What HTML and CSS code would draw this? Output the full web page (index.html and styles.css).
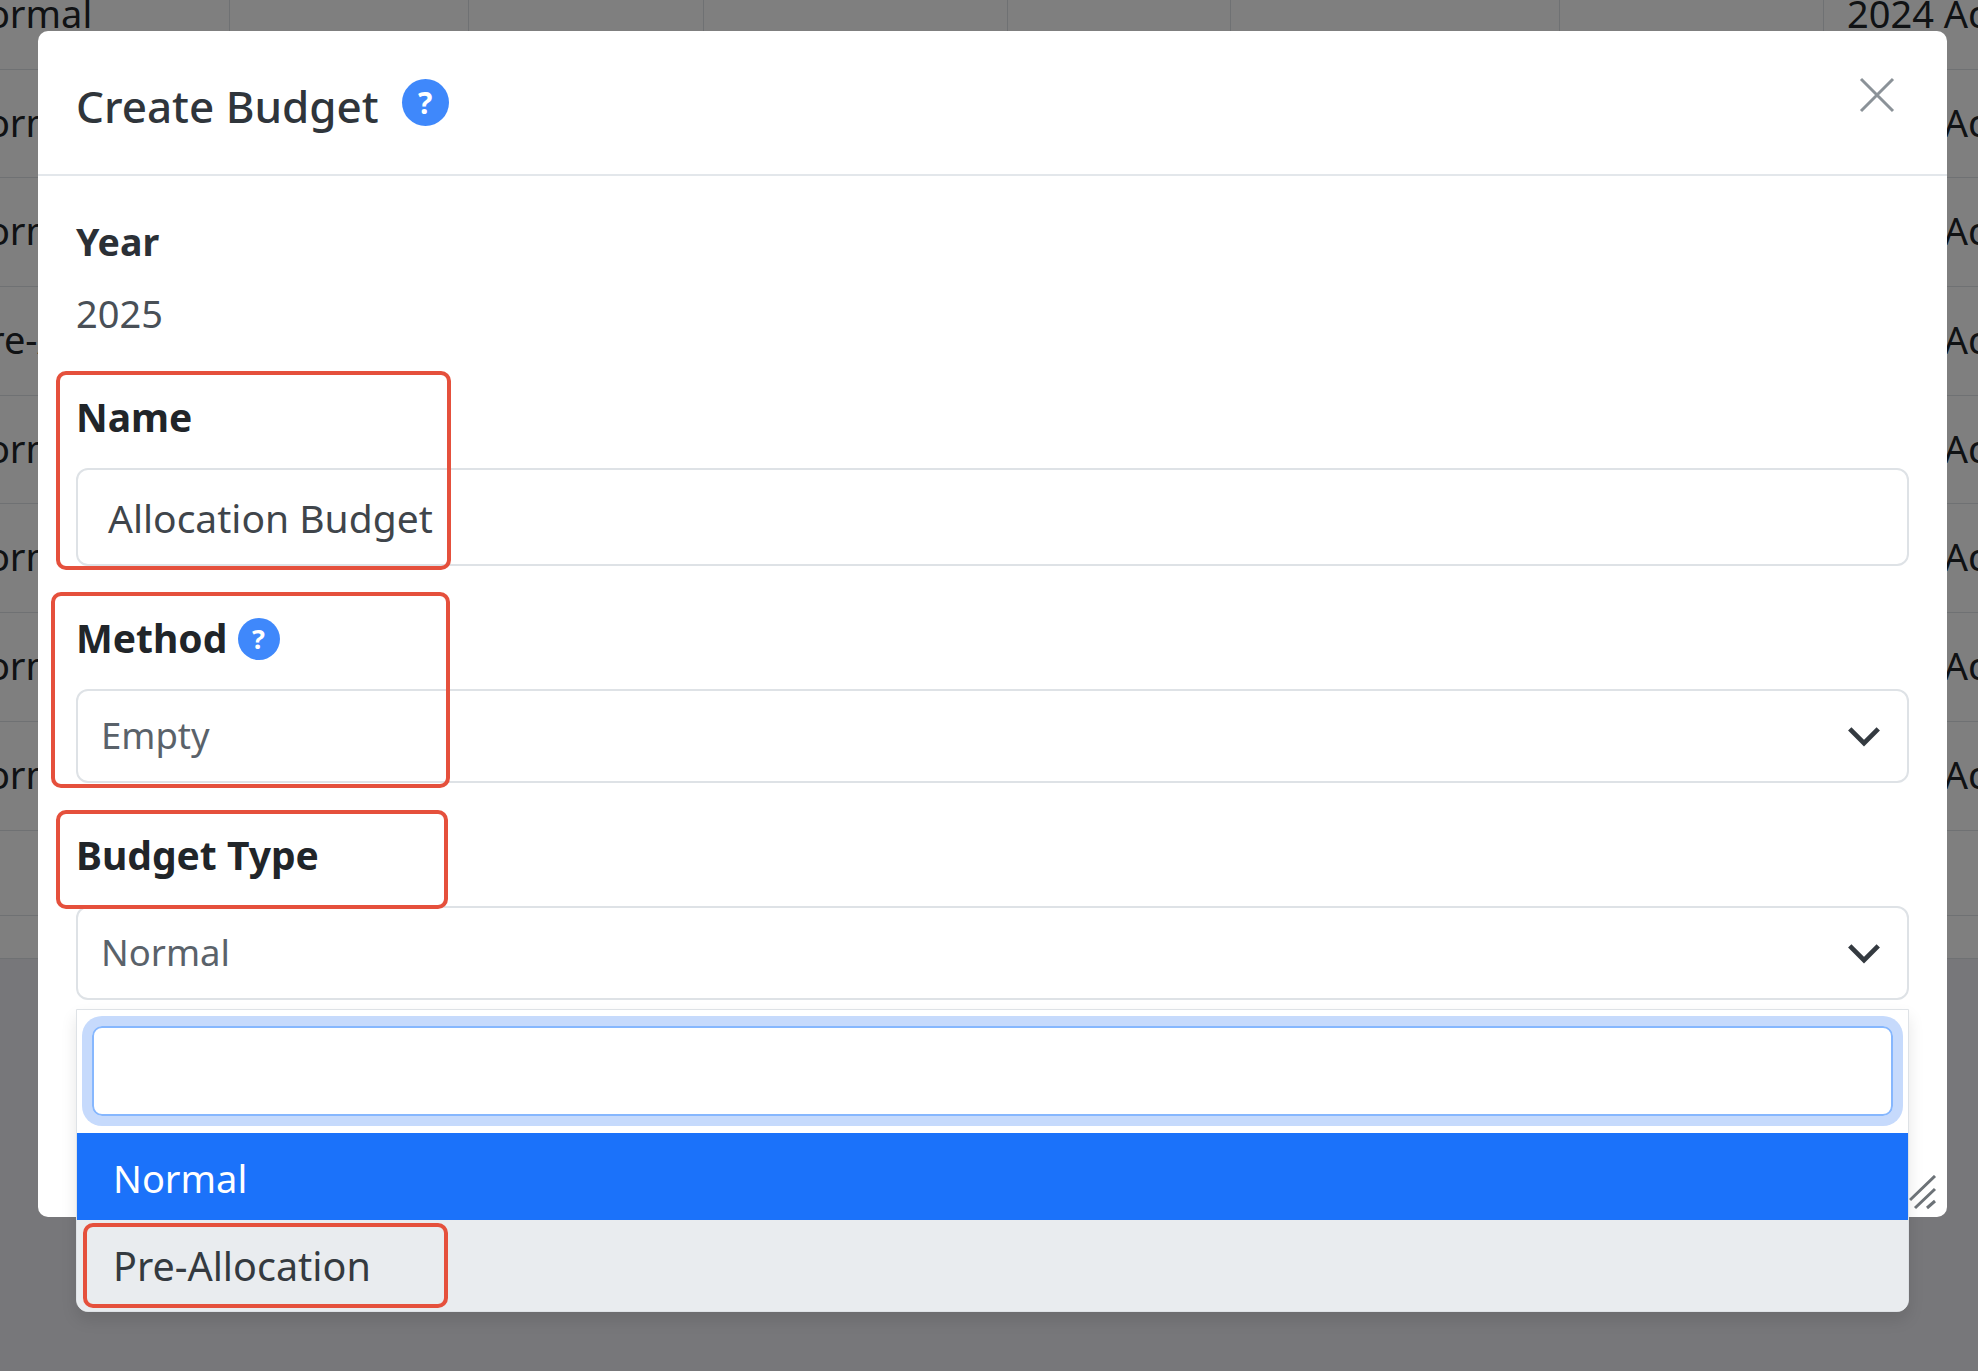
FILE: index.html
```html
<!DOCTYPE html>
<html lang="en">
<head>
  <meta charset="UTF-8">
  <title>Create Budget</title>
  <link rel="stylesheet" href="styles.css">
</head>
<body>
  <div class="table">
    <div class="row"><div>Normal</div><div></div><div></div><div></div><div></div><div></div><div></div><div>2024 Actual</div></div>
    <div class="row"><div>Normal</div><div></div><div></div><div></div><div></div><div></div><div></div><div>2024 Actual</div></div>
    <div class="row"><div>Normal</div><div></div><div></div><div></div><div></div><div></div><div></div><div>2024 Actual</div></div>
    <div class="row row-pre"><div>Pre-Allocation</div><div></div><div></div><div></div><div></div><div></div><div></div><div>2024 Actual</div></div>
    <div class="row"><div>Normal</div><div></div><div></div><div></div><div></div><div></div><div></div><div>2024 Actual</div></div>
    <div class="row"><div>Normal</div><div></div><div></div><div></div><div></div><div></div><div></div><div>2024 Actual</div></div>
    <div class="row"><div>Normal</div><div></div><div></div><div></div><div></div><div></div><div></div><div>2024 Actual</div></div>
    <div class="row"><div>Normal</div><div></div><div></div><div></div><div></div><div></div><div></div><div>2024 Actual</div></div>
    <div class="row row-blank"></div>
    <div class="row row-foot"></div>
  </div>

  <div class="backdrop"></div>

  <div class="modal">
    <div class="modal-header">
      <h5 class="modal-title">Create Budget</h5>
      <span class="help help-lg">?</span>
      <svg class="close-btn" viewBox="0 0 36 36"><path d="M2 2 L34 34 M34 2 L2 34"/></svg>
    </div>

    <div class="modal-body">
      <div class="year-field">
        <div class="form-label">Year</div>
        <div class="year-value">2025</div>
      </div>

      <div class="field">
        <div class="form-label">Name</div>
        <div class="form-control">Allocation Budget</div>
      </div>

      <div class="field">
        <div class="form-label">Method <span class="help">?</span></div>
        <div class="form-select">
          <span>Empty</span>
          <svg class="chevron" viewBox="0 0 16 16"><path d="M2 5l6 6 6-6"/></svg>
        </div>
      </div>

      <div class="field">
        <div class="form-label">Budget Type</div>
        <div class="select-wrap">
          <div class="form-select">
            <span>Normal</span>
            <svg class="chevron" viewBox="0 0 16 16"><path d="M2 5l6 6 6-6"/></svg>
          </div>
          <div class="dropdown">
            <div class="search-box"></div>
            <div class="option option-active">Normal</div>
            <div class="option option-hover">Pre-Allocation</div>
          </div>
        </div>
      </div>
    </div>

    <svg class="resize-handle" viewBox="0 0 30 36"><path d="M1 25 L26 1 M6 33 L26 14 M18 33 L26 26"/></svg>

    <div class="mark mark-name"></div>
    <div class="mark mark-method"></div>
    <div class="mark mark-type"></div>
    <div class="mark mark-option"></div>
  </div>
</body>
</html>
```

FILE: styles.css
```css
html, body {
  height: 100%;
}
body {
  margin: 0;
  overflow: hidden;
  position: relative;
  background-color: #eeeff4;
  color: #212529;
  font-family: "Noto Sans", "Open Sans", sans-serif;
  font-size: 38px;
}

/* table behind the modal */
.table {
  margin-top: -39px;
  margin-left: -55px;
  width: 2100px;
  background-color: #fff;
}
.row {
  display: grid;
  grid-template-columns: 285px 239px 235px 304px 223px 329px 264px 200px;
  height: 108.7px;
  border-bottom: 1px solid #dee2e6;
  box-sizing: border-box;
}
.row > div {
  padding-left: 23px;
  padding-bottom: 4px;
  border-right: 1px solid #dee2e6;
  display: flex;
  align-items: center;
  white-space: nowrap;
  overflow: hidden;
}
.row > div:first-child {
  padding-left: 13px;
}
.row-pre > div:first-child {
  padding-left: 21px;
}
.row-blank {
  height: 85px;
}
.row-foot {
  height: 43px;
}
.backdrop {
  position: absolute;
  top: 0;
  left: 0;
  right: 0;
  bottom: 0;
  background-color: rgba(0, 0, 0, 0.5);
}

/* modal */
.modal {
  position: absolute;
  top: 31px;
  left: 38px;
  width: 1909px;
  height: 1186px;
  background-color: #fff;
  border-radius: 10px;
}
.modal-header {
  height: 145px;
  box-sizing: border-box;
  padding-left: 38px;
  padding-right: 52px;
  border-bottom: 2px solid #e3e7eb;
  display: flex;
  align-items: center;
}
.modal-title {
  margin: 6px 0 0;
  font-size: 44px;
  font-weight: 500;
  color: #2f353b;
}
.help {
  display: inline-flex;
  justify-content: center;
  align-items: center;
  width: 42px;
  height: 42px;
  border-radius: 50%;
  background-color: #3f88fb;
  color: #fff;
  font-size: 27px;
  font-weight: 700;
  vertical-align: 4px;
}
.help-lg {
  width: 47px;
  height: 47px;
  margin-left: 23px;
  font-size: 30px;
}
.close-btn {
  width: 36px;
  height: 36px;
  margin-left: auto;
  margin-bottom: 16px;
  fill: none;
  stroke: #8b9298;
  stroke-width: 3;
}
.modal-body {
  padding: 41px 38px 0;
}
.form-label {
  font-size: 39px;
  font-weight: 700;
  line-height: 50px;
  margin-bottom: 26px;
}
.year-field {
  margin-bottom: 54px;
}
.year-field .form-label {
  font-size: 37.5px;
  margin-bottom: 21px;
  color: #2b3036;
}
.year-value {
  line-height: 50px;
  color: #495057;
}
.field {
  margin-bottom: 47px;
}
.form-control, .form-select {
  box-sizing: border-box;
  border: 2px solid #dee2e6;
  border-radius: 12px;
  display: flex;
  align-items: center;
}
.form-control {
  height: 98px;
  padding-left: 30px;
  font-size: 39px;
  color: #3f454b;
}
.form-select {
  height: 94px;
  padding-left: 23px;
  padding-right: 24px;
  justify-content: space-between;
  font-size: 36.5px;
  color: #5a626a;
}
.form-select span {
  padding-bottom: 3px;
}
.chevron {
  width: 38px;
  height: 38px;
  fill: none;
  stroke: #343a40;
  stroke-width: 2;
}
.select-wrap {
  position: relative;
}
.dropdown {
  position: absolute;
  top: 103px;
  left: 0;
  right: 0;
  box-sizing: border-box;
  height: 303px;
  padding-top: 16px;
  background-color: #fff;
  border: 1px solid #dee2e6;
  border-radius: 0 0 12px 12px;
  box-shadow: 0 8px 16px rgba(0, 0, 0, 0.1);
  overflow: hidden;
}
.search-box {
  height: 90px;
  margin: 0 15px 17px;
  box-sizing: border-box;
  border: 2px solid #86b7fe;
  border-radius: 10px;
  box-shadow: 0 0 0 10px #c6dafc;
}
.option {
  height: 87px;
  padding-left: 36px;
  display: flex;
  align-items: center;
}
.option-active {
  padding-top: 3px;
  box-sizing: border-box;
  background-color: #1b72fa;
  color: #fff;
}
.option-hover {
  height: 92px;
  font-size: 39.5px;
  background-color: #e9ecef;
  color: #343a40;
}
.resize-handle {
  position: absolute;
  right: 8px;
  bottom: 6px;
  width: 30px;
  height: 36px;
  fill: none;
  stroke: #6c7277;
  stroke-width: 3;
}

/* red annotation boxes */
.mark {
  position: absolute;
  box-sizing: border-box;
  border: 4px solid #e5503c;
  border-radius: 10px;
}
.mark-name {
  left: 18px;
  top: 340px;
  width: 395px;
  height: 199px;
}
.mark-method {
  left: 13px;
  top: 561px;
  width: 399px;
  height: 196px;
}
.mark-type {
  left: 18px;
  top: 779px;
  width: 392px;
  height: 99px;
}
.mark-option {
  left: 45px;
  top: 1192px;
  width: 365px;
  height: 85px;
}
```
